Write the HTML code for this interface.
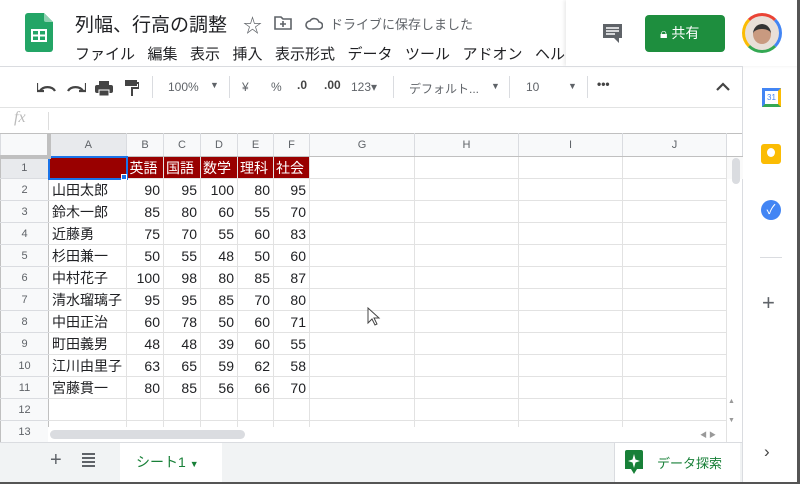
<!DOCTYPE html>
<html><head><meta charset="utf-8"><style>
*{box-sizing:border-box;margin:0;padding:0}
body{width:800px;height:484px;overflow:hidden;background:#fff;font-family:"Liberation Sans","Noto Sans CJK JP",sans-serif;position:relative;color:#202124}
.a{position:absolute}
.tb{color:#5f6368;font-size:12px}
.sep{position:absolute;top:76px;width:1px;height:22px;background:#dadce0}
table{border-collapse:collapse;position:absolute;left:0;top:133px;table-layout:fixed}
td{border:1px solid #e2e2e2;height:22px;font-size:14px;padding:0 3px;white-space:nowrap;overflow:hidden}
td.n{text-align:right}
tr.h td{background:#f8f9fa;color:#5f6368;text-align:center;font-size:11px;height:23px;border-color:#c0c0c0 #dadce0}
td.r{background:#f8f9fa;color:#5f6368;text-align:center;font-size:11px;border-color:#dadce0 #c0c0c0}
td.red{background:#990000;color:#fff;padding:0 2px}
</style></head><body>
<svg class="a" style="left:25px;top:13px" width="28" height="39" viewBox="0 0 28 39"><path d="M3 0h16l9 9v27a3 3 0 0 1-3 3H3a3 3 0 0 1-3-3V3a3 3 0 0 1 3-3z" fill="#23a566"/><path d="M19 0l9 9h-7a2 2 0 0 1-2-2z" fill="#8ed1b1"/><rect x="7" y="17" width="14" height="11" fill="none" stroke="#fff" stroke-width="2"/><path d="M14 17v11M7 22.5h14" stroke="#fff" stroke-width="2"/></svg>
<div class="a" style="left:75px;top:10px;font-size:19px">列幅、行高の調整</div>
<div class="a" style="left:243px;top:11px;font-size:19px;color:#5f6368">☆</div>
<svg class="a" style="left:274px;top:15px" width="18" height="15"><path d="M1 2h6l2 2h8v10H1z" fill="none" stroke="#5f6368" stroke-width="1.6"/><path d="M9 6v6M6 9h6" stroke="#5f6368" stroke-width="1.6"/></svg>
<svg class="a" style="left:305px;top:16px" width="18" height="14"><path d="M5 13a4 4 0 0 1 0-8 5 5 0 0 1 9 1 3.5 3.5 0 0 1 0 7z" fill="none" stroke="#5f6368" stroke-width="1.6"/></svg>
<div class="a" style="left:330px;top:14px;font-size:13px;color:#5f6368">ドライブに保存しました</div>
<div class="a" style="left:75px;top:43px;font-size:15px;word-spacing:0">ファイル&nbsp;&nbsp;&nbsp;編集&nbsp;&nbsp;&nbsp;表示&nbsp;&nbsp;&nbsp;挿入&nbsp;&nbsp;&nbsp;表示形式&nbsp;&nbsp;&nbsp;データ&nbsp;&nbsp;&nbsp;ツール&nbsp;&nbsp;&nbsp;アドオン&nbsp;&nbsp;&nbsp;ヘルプ</div>
<div class="a" style="left:566px;top:0;width:234px;height:66px;background:#fff;box-shadow:-2px 0 3px rgba(0,0,0,.08)"></div>
<svg class="a" style="left:602px;top:23px" width="21" height="21"><path d="M1 1h19v14h-3v5l-5-5H1z" fill="#5f6368"/><path d="M4 5h13M4 8h13M4 11h9" stroke="#fff" stroke-width="1.4"/></svg>
<div class="a" style="left:645px;top:15px;width:80px;height:37px;background:#1e8e3e;border-radius:4px;color:#fff;font-size:14px;line-height:37px;padding-left:15px">&#128274;&#xFE0E; 共有</div>
<div class="a" style="left:742px;top:13px;width:40px;height:40px;border-radius:50%;border:3px solid;border-color:#ea4335 #4285f4 #34a853 #fbbc04;background:#e8dfd8;overflow:hidden"><div style="width:18px;height:20px;background:#c99a80;border-radius:50%;margin:8px auto 0;border-top:5px solid #333"></div></div>
<div class="a" style="left:0;top:66px;width:742px;height:1px;background:#dadce0"></div>
<svg class="a" style="left:37px;top:81px" width="20" height="12"><path d="M3 10a8 6 0 0 1 15 0" fill="none" stroke="#444" stroke-width="2.2"/><path d="M0 2v8h7" fill="none" stroke="#444" stroke-width="2.2"/></svg>
<svg class="a" style="left:66px;top:81px" width="20" height="12"><path d="M17 10a8 6 0 0 0-15 0" fill="none" stroke="#444" stroke-width="2.2"/><path d="M20 2v8h-7" fill="none" stroke="#444" stroke-width="2.2"/></svg>
<svg class="a" style="left:95px;top:81px" width="18" height="15"><rect x="4" y="0" width="10" height="4" fill="#444"/><rect x="0" y="4" width="18" height="8" rx="2" fill="#444"/><rect x="4" y="9" width="10" height="6" fill="#444" stroke="#fff"/></svg>
<svg class="a" style="left:125px;top:80px" width="14" height="17"><rect x="0" y="0" width="12" height="6" fill="#444"/><path d="M12 3h2v5H7v8" fill="none" stroke="#444" stroke-width="2"/></svg>
<div class="sep" style="left:152px"></div>
<div class="a tb" style="left:168px;top:80px">100%</div>
<div class="a tb" style="left:210px;top:80px;font-size:9px">▼</div>
<div class="sep" style="left:229px"></div>
<div class="a tb" style="left:242px;top:80px">¥</div>
<div class="a tb" style="left:271px;top:80px">%</div>
<div class="a tb" style="left:297px;top:78px;font-weight:bold;color:#444">.0</div>
<div class="a tb" style="left:324px;top:78px;font-weight:bold;color:#444">.00</div>
<div class="a tb" style="left:351px;top:80px">123▾</div>
<div class="sep" style="left:393px"></div>
<div class="a tb" style="left:409px;top:80px">デフォルト...</div>
<div class="a tb" style="left:491px;top:81px;font-size:9px">▼</div>
<div class="sep" style="left:509px"></div>
<div class="a tb" style="left:526px;top:80px">10</div>
<div class="a tb" style="left:568px;top:81px;font-size:9px">▼</div>
<div class="sep" style="left:587px"></div>
<div class="a tb" style="left:597px;top:77px;font-weight:bold;color:#444">•••</div>
<svg class="a" style="left:716px;top:82px" width="14" height="10"><path d="M1 8l6-6 6 6" fill="none" stroke="#444" stroke-width="2.2"/></svg>
<div class="a" style="left:0;top:107px;width:742px;height:1px;background:#e2e3e3"></div>
<div class="a" style="left:14px;top:109px;font-size:16px;font-style:italic;color:#bbb;font-family:'Liberation Serif',serif">fx</div>
<div class="a" style="left:48px;top:112px;width:1px;height:18px;background:#ddd"></div>
<div class="a" style="left:742px;top:66px;width:1px;height:418px;background:#dadce0"></div>
<div class="a" style="left:762px;top:88px;width:19px;height:19px;border:3px solid;border-color:#4285f4 #fbbc04 #34a853 #4285f4;font-size:8px;color:#4285f4;text-align:center;line-height:13px">31</div>
<div class="a" style="left:761px;top:144px;width:20px;height:20px;background:#fbbc04;border-radius:3px"><div style="width:8px;height:9px;border-radius:50%;background:#fff;margin:4px auto 0"></div></div>
<div class="a" style="left:761px;top:200px;width:20px;height:20px;background:#4285f4;border-radius:50%;color:#fff;font-size:13px;text-align:center;line-height:20px">✓</div>
<div class="a" style="left:760px;top:257px;width:22px;height:1px;background:#dadce0"></div>
<div class="a" style="left:762px;top:290px;font-size:22px;color:#5f6368">+</div>
<div class="a" style="left:764px;top:442px;font-size:17px;color:#444">›</div>
<table>
<colgroup><col style="width:48px"><col style="width:78px"><col style="width:37px"><col style="width:37px"><col style="width:37px"><col style="width:36px"><col style="width:36px"><col style="width:105px"><col style="width:104px"><col style="width:104px"><col style="width:104px"><col style="width:16px"></colgroup>
<tr class="h"><td style="background:#f8f9fa;border-right:4px solid #c0c0c0;border-bottom:4px solid #c0c0c0"></td><td style="background:#e8eaed">A</td><td>B</td><td>C</td><td>D</td><td>E</td><td>F</td><td>G</td><td>H</td><td>I</td><td>J</td><td style="background:#fff"></td></tr>
<tr><td class="r" style="background:#e8eaed">1</td><td class="red" style="border:2px solid #1a73e8"></td><td class="red">英語</td><td class="red">国語</td><td class="red">数学</td><td class="red">理科</td><td class="red">社会</td><td></td><td></td><td></td><td></td><td style="border:none;background:#fafafa"></td></tr>
<tr><td class="r">2</td><td>山田太郎</td><td class="n">90</td><td class="n">95</td><td class="n">100</td><td class="n">80</td><td class="n">95</td><td></td><td></td><td></td><td></td><td style="border:none"></td></tr>
<tr><td class="r">3</td><td>鈴木一郎</td><td class="n">85</td><td class="n">80</td><td class="n">60</td><td class="n">55</td><td class="n">70</td><td></td><td></td><td></td><td></td><td style="border:none"></td></tr>
<tr><td class="r">4</td><td>近藤勇</td><td class="n">75</td><td class="n">70</td><td class="n">55</td><td class="n">60</td><td class="n">83</td><td></td><td></td><td></td><td></td><td style="border:none"></td></tr>
<tr><td class="r">5</td><td>杉田兼一</td><td class="n">50</td><td class="n">55</td><td class="n">48</td><td class="n">50</td><td class="n">60</td><td></td><td></td><td></td><td></td><td style="border:none"></td></tr>
<tr><td class="r">6</td><td>中村花子</td><td class="n">100</td><td class="n">98</td><td class="n">80</td><td class="n">85</td><td class="n">87</td><td></td><td></td><td></td><td></td><td style="border:none"></td></tr>
<tr><td class="r">7</td><td>清水瑠璃子</td><td class="n">95</td><td class="n">95</td><td class="n">85</td><td class="n">70</td><td class="n">80</td><td></td><td></td><td></td><td></td><td style="border:none"></td></tr>
<tr><td class="r">8</td><td>中田正治</td><td class="n">60</td><td class="n">78</td><td class="n">50</td><td class="n">60</td><td class="n">71</td><td></td><td></td><td></td><td></td><td style="border:none"></td></tr>
<tr><td class="r">9</td><td>町田義男</td><td class="n">48</td><td class="n">48</td><td class="n">39</td><td class="n">60</td><td class="n">55</td><td></td><td></td><td></td><td></td><td style="border:none"></td></tr>
<tr><td class="r">10</td><td>江川由里子</td><td class="n">63</td><td class="n">65</td><td class="n">59</td><td class="n">62</td><td class="n">58</td><td></td><td></td><td></td><td></td><td style="border:none"></td></tr>
<tr><td class="r">11</td><td>宮藤貫一</td><td class="n">80</td><td class="n">85</td><td class="n">56</td><td class="n">66</td><td class="n">70</td><td></td><td></td><td></td><td></td><td style="border:none"></td></tr>
<tr><td class="r">12</td><td></td><td></td><td></td><td></td><td></td><td></td><td></td><td></td><td></td><td></td><td style="border:none"></td></tr>
<tr><td class="r">13</td><td></td><td></td><td></td><td></td><td></td><td></td><td></td><td></td><td></td><td></td><td style="border:none"></td></tr>
</table>
<div class="a" style="left:121px;top:174px;width:6px;height:6px;background:#1a73e8;border:1px solid #fff"></div>
<div class="a" style="left:732px;top:158px;width:8px;height:26px;background:#dadce0;border-radius:4px"></div>
<div class="a" style="left:726px;top:157px;width:1px;height:285px;background:#e2e2e2"></div>
<div class="a" style="left:728px;top:398px;font-size:7px;color:#999">▲</div>
<div class="a" style="left:728px;top:417px;font-size:7px;color:#999">▼</div>
<div class="a" style="left:48px;top:427px;width:678px;height:15px;background:#fff"></div>
<div class="a" style="left:50px;top:430px;width:195px;height:9px;background:#dadce0;border-radius:5px"></div>
<div class="a" style="left:700px;top:430px;font-size:7px;color:#999">◀ ▶</div>
<svg class="a" style="left:367px;top:307px" width="14" height="20"><path d="M1 1v15l4-4 3 6 2-1-3-6h5z" fill="#fff" stroke="#444" stroke-width="1"/></svg>
<div class="a" style="left:0;top:442px;width:742px;height:42px;background:#f1f3f4;border-top:1px solid #dadce0"></div>
<div class="a" style="left:50px;top:449px;font-size:20px;color:#5f6368">+</div>
<div class="a" style="left:82px;top:453px;width:13px;height:14px;background:repeating-linear-gradient(#5f6368 0 2px,transparent 2px 4px)"></div>
<div class="a" style="left:120px;top:443px;width:102px;height:41px;background:#fff;color:#188038;font-size:14px;line-height:38px;padding-left:16px">シート1 <span style="font-size:9px;color:#188038">▼</span></div>
<div class="a" style="left:614px;top:443px;width:126px;height:41px;background:#fff;border-left:1px solid #dadce0"></div>
<svg class="a" style="left:625px;top:450px" width="18" height="25"><path d="M2 0h14a2 2 0 0 1 2 2v17h-6l-3 5-3-5H0V2a2 2 0 0 1 2-2z" fill="#188038"/><path d="M9 4l1.5 5.5L15 11l-4.5 1.5L9 18l-1.5-5.5L3 11l4.5-1.5z" fill="#fff"/></svg>
<div class="a" style="left:657px;top:453px;font-size:13px;color:#188038">データ探索</div>
<div class="a" style="left:797px;top:0;width:3px;height:484px;background:#555"></div>
<div class="a" style="left:0;top:482px;width:800px;height:2px;background:#555"></div>
</body></html>
